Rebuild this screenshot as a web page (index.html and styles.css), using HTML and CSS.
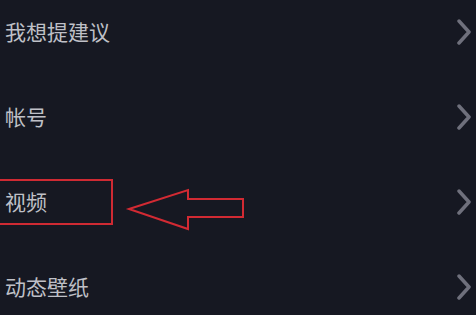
FILE: index.html
```html
<!DOCTYPE html>
<html lang="zh">
<head>
<meta charset="utf-8">
<link rel="stylesheet" href="styles.css">
</head>
<body>
<div class="list">
  <div class="row"><span class="label">我想提建议</span><svg class="chev" viewBox="0 0 16 26"><path d="M3 2 L13 13 L3 24"/></svg></div>
  <div class="row"><span class="label">帐号</span><svg class="chev" viewBox="0 0 16 26"><path d="M3 2 L13 13 L3 24"/></svg></div>
  <div class="row marked"><span class="label">视频</span><svg class="chev" viewBox="0 0 16 26"><path d="M3 2 L13 13 L3 24"/></svg>
    <div class="box"></div>
    <svg class="arrow" viewBox="0 0 120 44"><path d="M2 20 L61 1 L61 10 L116 10 L116 28 L61 28 L61 40 Z"/></svg>
  </div>
  <div class="row"><span class="label">动态壁纸</span><svg class="chev" viewBox="0 0 16 26"><path d="M3 2 L13 13 L3 24"/></svg></div>
</div>
</body>
</html>
```
FILE: styles.css
```css
html, body {
  margin: 0;
  padding: 0;
  background: #161822;
  width: 476px;
  height: 315px;
  overflow: hidden;
}
.list {
  margin-top: -11px;
  display: flex;
  flex-direction: column;
}
.row {
  position: relative;
  height: 85px;
  display: flex;
  align-items: center;
  justify-content: space-between;
  padding: 0 4px 0 5px;
}
.label {
  font-family: "Noto Sans CJK SC", sans-serif;
  font-size: 21px;
  color: #bfc0c7;
  line-height: 1;
}
.chev {
  width: 16px;
  height: 26px;
}
.chev path {
  fill: none;
  stroke: #6f707c;
  stroke-width: 3.5;
  stroke-linecap: round;
  stroke-linejoin: round;
}
.box {
  position: absolute;
  left: -4px;
  top: 20px;
  width: 113px;
  height: 42px;
  border: 2px solid #cf2a33;
}
.arrow {
  position: absolute;
  left: 127px;
  top: 30px;
  width: 120px;
  height: 44px;
  overflow: visible;
}
.arrow path {
  fill: none;
  stroke: #d22a33;
  stroke-width: 2;
  stroke-linejoin: miter;
}
```
